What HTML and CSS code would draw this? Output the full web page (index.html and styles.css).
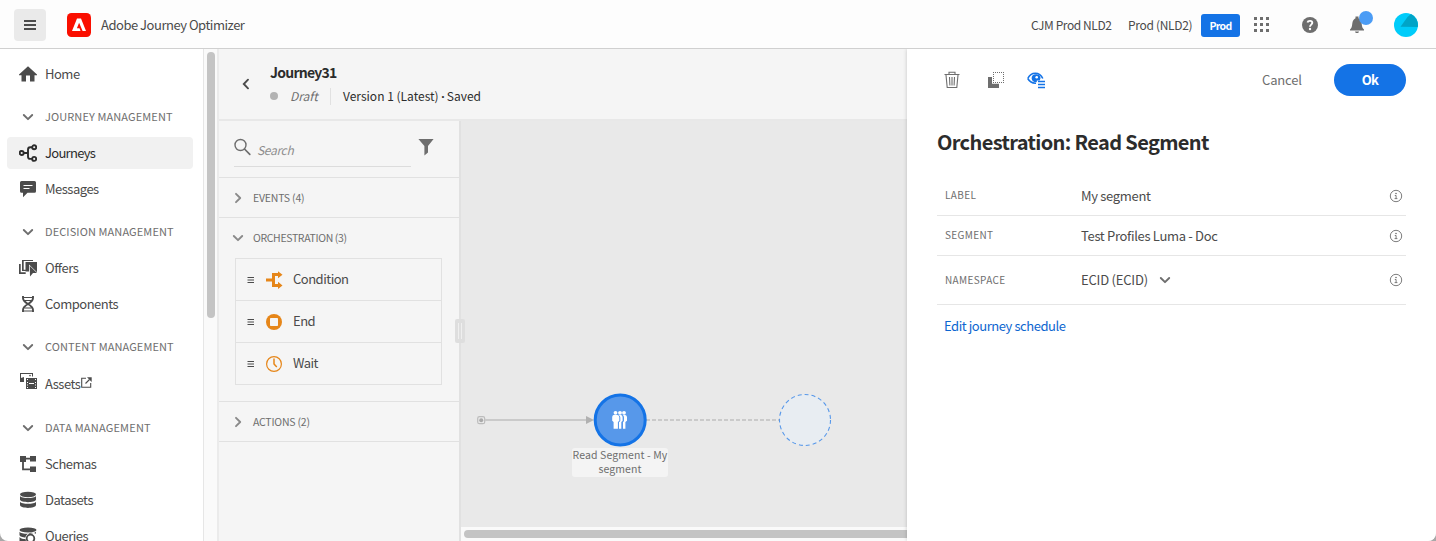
FILE: index.html
```html
<!DOCTYPE html>
<html lang="en">
<head>
<meta charset="utf-8">
<title>Adobe Journey Optimizer</title>
<link rel="stylesheet" href="styles.css">
</head>
<body>
<svg class="defs" width="0" height="0">
  <symbol id="down" viewBox="0 0 12 12"><path d="M1.8 4 6 8.2 10.200 4" fill="none" stroke="currentColor" stroke-width="1.9" stroke-linecap="round" stroke-linejoin="round"/></symbol>
  <symbol id="right" viewBox="0 0 12 12"><path d="M4 1.800 8.200 6 4 10.200" fill="none" stroke="currentColor" stroke-width="1.9" stroke-linecap="round" stroke-linejoin="round"/></symbol>
  <symbol id="grip" viewBox="0 0 8 8"><path d="M.5 1.500h6.500M.5 4h6.500M.5 6.500h6.500" stroke="currentColor" stroke-width="1"/></symbol>
  <symbol id="info" viewBox="0 0 14 14"><circle cx="7" cy="7" r="5.700" fill="none" stroke="currentColor" stroke-width=".9"/><circle cx="7" cy="4.500" r=".8" fill="currentColor"/><path d="M5.800 6.500h1.300v3M5.600 9.600h2.800" fill="none" stroke="currentColor" stroke-width=".9"/></symbol>
</svg>
<div class="app">
  <header class="topbar">
    <button class="menu-btn" aria-label="Menu"><svg width="12" height="10"><path d="M0 1h12M0 5h12M0 9h12" stroke="#4b4b4b" stroke-width="2"/></svg></button>
    <svg class="logo" width="24" height="24" viewBox="0 0 24 24"><rect width="24" height="24" rx="4.500" fill="#fa0f00"/><path d="M5 18 10 5.500h4L19 18h-3.400l-3.500-8.200-2.200 5.400h2.600l1 2.800z" fill="#fff"/></svg>
    <span class="brand">Adobe Journey Optimizer</span>
    <div class="top-right">
      <span class="org">CJM Prod NLD2</span>
      <span class="sandbox">Prod (NLD2)</span>
      <span class="badge">Prod</span>
      <svg class="apps" width="16" height="16" fill="#6e6e6e"><path d="M0 0h3v3H0zM6 0h3v3H6zM12 0h3v3h-3zM0 6h3v3H0zM6 6h3v3H6zM12 6h3v3h-3zM0 12h3v3H0zM6 12h3v3H6zM12 12h3v3h-3z"/></svg>
      <svg class="help" width="16" height="16" viewBox="0 0 16 16"><circle cx="8" cy="8" r="8" fill="#6e6e6e"/><path d="M5.500 5.500C6 3.300 10.300 3.300 10.300 5.800 10.300 7.700 8 7.600 8 9.800" fill="none" stroke="#fff" stroke-width="1.900"/><circle cx="8" cy="12" r="1.200" fill="#fff"/></svg>
      <svg class="bell" width="26" height="24" viewBox="0 0 26 24"><path d="M2 18.500c3-2 1.500-7 3.500-9.500C6.300 8 7.500 7.500 7.500 7V5.500h3V7c0 .5 1.300 1 2 2 2 2.500.500 7.500 3.500 9.500v1H2zM7 20.500h4c-.2 2-3.800 2-4 0z" fill="#6e6e6e"/><circle cx="18" cy="7" r="7" fill="#4b9cf5"/></svg>
      <svg class="avatar" width="24" height="24" viewBox="0 0 24 24"><circle cx="12" cy="12" r="12" fill="#00ccfa"/><path d="M13.500 4 17 1.100A12 12 0 0 1 23.800 14L6.500 13.700z" fill="#00a4c7"/></svg>
    </div>
  </header>
  <div class="body">
    <nav class="side">
      <a class="item"><svg class="ic" viewBox="0 0 18 18"><path d="M9 1.200 0 9.400v.8h2.500V16.500H7v-6h4v6h4.500v-6.300H18v-.8z"/></svg><span>Home</span></a>
      <div class="group"><svg class="chev"><use href="#down"/></svg><span>JOURNEY MANAGEMENT</span></div>
      <a class="item active"><svg class="ic line" viewBox="0 0 18 18"><circle cx="2.700" cy="9" r="2"/><circle cx="15.200" cy="3.300" r="2"/><circle cx="15.200" cy="14.900" r="2"/><path d="M4.800 9h3.700M13.200 3.300h-2q-2.200 0-2.200 2.500v6.600q0 2.500 2.200 2.500h2"/></svg><span>Journeys</span></a>
      <a class="item"><svg class="ic" viewBox="0 0 18 18"><path d="M2.500 1h13A1.500 1.500 0 0 1 17 2.500v8.700a1.500 1.500 0 0 1-1.500 1.500H8.500L4 17.300v-4.600H2.500A1.500 1.500 0 0 1 1 11.200V2.500A1.500 1.500 0 0 1 2.500 1zM4.500 5v1h9V5zm0 3v1h6V8z" fill-rule="evenodd"/></svg><span>Messages</span></a>
      <div class="group"><svg class="chev"><use href="#down"/></svg><span>DECISION MANAGEMENT</span></div>
      <a class="item"><svg class="ic" viewBox="0 0 18 18"><path d="M0 5h1.700v8.300h5V15H0zM3 1h11v1H4.700v8.800h2V12H3zM6.500 3H18v10.200L10 5.500v7H6.500z"/><path d="M10.700 6.800 18 13.900h-4L11 17.600z"/></svg><span>Offers</span></a>
      <a class="item"><svg class="ic" viewBox="0 0 18 18"><path d="M4 1v2c0 6 10 6 10 12v2M14 1v2C14 9 4 9 4 15v2" fill="none" stroke="currentColor" stroke-width="1.900"/><path d="M4 2h10v1H4zM5.500 5h7v1h-7zM5.500 12.500h7v1h-7zM4 15.500h10v1H4z"/></svg><span>Components</span></a>
      <div class="group"><svg class="chev"><use href="#down"/></svg><span>CONTENT MANAGEMENT</span></div>
      <a class="item assets"><svg class="ic" viewBox="0 0 18 18"><path d="M1 1h13v3.500h-1V2H2v4l3-1v5H1z"/><circle cx="11" cy="3.600" r=".8"/><path fill-rule="evenodd" d="M7 6h11v11H7zM8 7v1h1V7zm0 3v1h1v-1zm0 2.500v1h1v-1zm0 2.500v1h1v-1zM16 7v1h1V7zm0 3v1h1v-1zm0 2.500v1h1v-1zm0 2.500v1h1v-1zM10 11v1h5v-1z"/></svg><span>Assets</span><svg class="ext" viewBox="0 0 11 11"><path d="M5 1.200H.7v9h9V6M4.500 6.500l4-4" fill="none" stroke="currentColor" stroke-width="1.100"/><path d="M6 .3h4.700V5z"/></svg></a>
      <div class="group low"><svg class="chev"><use href="#down"/></svg><span>DATA MANAGEMENT</span></div>
      <a class="item"><svg class="ic" viewBox="0 0 18 18"><path d="M1 1h6v6H1zM11 1h6v5.500h-6zM11 11.500h6v5.500h-6z"/><path d="M7 3.700h4M4 7v7.300h7" fill="none" stroke="currentColor" stroke-width="1.800"/></svg><span>Schemas</span></a>
      <a class="item"><svg class="ic" viewBox="0 0 18 18"><ellipse cx="9" cy="3.500" rx="8" ry="2.700"/><path d="M1 5c1.500 2.700 14.500 2.700 16 0v3.800c-1 3.200-15 3.200-16 0zM1 10.700c1.500 2.700 14.500 2.700 16 0v3.600c-1 3.500-15 3.500-16 0z"/></svg><span>Datasets</span></a>
      <a class="item"><svg class="ic" viewBox="0 0 18 18"><ellipse cx="9" cy="3" rx="8.500" ry="2.500"/><path d="M.5 4.800c1.500 2.700 14 2.700 16.500 0v2C13 4.500 7 6 6.500 10.500 4 10.500.5 9.500.5 8zM.5 10c1 1.700 4 2 6 2 .3 2 1 3 2 4.500-4 0-8-1-8-2.500z"/><circle cx="11.500" cy="11.500" r="3.800" fill="none" stroke="currentColor" stroke-width="1.800"/><path d="m14 14 3.500 3.500" stroke="currentColor" stroke-width="2"/></svg><span>Queries</span></a>
    </nav>
    <div class="vtrack"><div class="vthumb"></div></div>
    <main class="editor">
      <div class="ed-head">
        <svg class="back" viewBox="0 0 12 12"><path d="M8 1.700 3.800 6 8 10.300" fill="none" stroke="currentColor" stroke-width="1.900" stroke-linecap="round"/></svg>
        <div class="ed-title">
          <h1>Journey31</h1>
          <div class="meta"><i class="dot"></i><em>Draft</em><span class="version">Version 1 (Latest) <b>·</b> Saved</span></div>
        </div>
      </div>
      <div class="ed-body">
        <aside class="palette">
          <div class="search">
            <div class="field"><svg width="18" height="18" viewBox="0 0 18 18"><circle cx="6.500" cy="7" r="5.500" fill="none" stroke="#6e6e6e" stroke-width="1.400"/><path d="m10.500 11 5.300 5.300" stroke="#6e6e6e" stroke-width="1.700" stroke-linecap="round"/></svg><em>Search</em></div>
            <svg class="filter" width="16" height="18" viewBox="0 0 16 18"><path d="M.4 1h15.200L10 8v6.500L6.400 17.500V8z" fill="#6e6e6e"/></svg>
          </div>
          <div class="acc"><svg class="chev"><use href="#right"/></svg><span>EVENTS (4)</span></div>
          <section class="open">
            <div class="acc"><svg class="chev"><use href="#down"/></svg><span>ORCHESTRATION (3)</span></div>
            <div class="cards">
              <div class="card"><svg class="grip"><use href="#grip"/></svg><svg class="ci" viewBox="0 0 18 18"><path d="M0 7.500h6V2h6V.2L16.500 3.700 12 7.300V5H9v8h3v-2.200l4.500 3.600L12 18v-2H6v-5.500H0z" fill="#e68619"/></svg><span>Condition</span></div>
              <div class="card"><svg class="grip"><use href="#grip"/></svg><svg class="ci" viewBox="0 0 18 18"><circle cx="8" cy="9" r="8" fill="#e68619"/><rect x="4" y="5" width="8" height="8" rx=".7" fill="#f5f5f5"/></svg><span>End</span></div>
              <div class="card"><svg class="grip"><use href="#grip"/></svg><svg class="ci" viewBox="0 0 18 18"><circle cx="8" cy="9" r="7.400" fill="none" stroke="#e68619" stroke-width="1.200"/><path d="M8 3.500V9l2.800 2.900" fill="none" stroke="#e68619" stroke-width="1.500"/></svg><span>Wait</span></div>
            </div>
          </section>
          <div class="acc"><svg class="chev"><use href="#right"/></svg><span>ACTIONS (2)</span></div>
          <div class="handle"><i></i></div>
        </aside>
        <div class="canvas">
          <div class="stage">
            <svg class="links" width="446" height="407">
              <rect x="16.700" y="295.700" width="7" height="7" rx="1.800" fill="none" stroke="#bcbcbc" stroke-width="1.200"/><circle cx="20.200" cy="299.200" r="2" fill="#aaa"/>
              <path d="M24 299h103" stroke="#cacaca" stroke-width="2"/><path d="M125 295v8l8-4z" fill="#b1b1b1"/>
              <path d="M185 299h133" stroke="#cacaca" stroke-width="2" stroke-dasharray="4 2"/>
              <circle cx="159.200" cy="299" r="25" fill="#5798ea" stroke="#1473e6" stroke-width="3"/>
              <g fill="#fff"><circle cx="163" cy="291.800" r="1.900"/><circle cx="159" cy="291.800" r="1.900"/><circle cx="154.500" cy="291.800" r="1.900"/><path d="M152.500 294h4q1.800.500 1.800 2.300v3.500l-1.400 1.200v6.800h-4.300v-6.800l-1.400-1.200v-3.500q0-2 1.300-2.300zM157.600 294h2.500q1.500.5 1.500 2.300v3.500l-1.300 1.300v6.700H158v-6.600l1.300-1.300v-3.500q0-1.800-1.700-2.400zM161.800 294h2.500q1.700.5 1.700 2.300v3.500l-1.600 1.300v6.700H162v-6.600l1-1.300v-3.500q0-1.800-1.200-2.400z"/></g>
              <circle cx="344" cy="299" r="25.500" fill="#e8edf2" stroke="#5798ea" stroke-width="1.100" stroke-dasharray="4 3"/>
            </svg>
            <div class="node-label">Read Segment - My<br>segment</div>
          </div>
          <div class="htrack"><div class="hthumb"></div></div>
        </div>
      </div>
    </main>
    <aside class="panel">
      <div class="tools">
        <svg width="16" height="18" viewBox="0 0 16 18"><path d="M.5 3.500h15M5 3V1.300h6V3M2 4l1.200 12.500h9.600L14 4M5.500 6l.4 8.500M8 6v8.500M10.500 6l-.4 8.500" fill="none" stroke="#6e6e6e" stroke-width="1.100"/></svg>
        <svg class="dup" width="18" height="18" viewBox="0 0 18 18"><path d="M1 6h4v6.700h7V17H1z" fill="#6e6e6e"/><path d="M6 1.500h11M6 11.500h11M6.500 3v8M16.500 3v8" fill="none" stroke="#6e6e6e" stroke-dasharray="1 1"/></svg>
        <svg class="eye" width="19" height="18" viewBox="0 0 19 18"><path d="M.8 7.500c3.200-7 11.800-7 15 0M.8 7.500c2 3.500 5 4.900 8.200 4.700" fill="none" stroke="#1473e6" stroke-width="1.600"/><path d="M9 3.200a4 4 0 1 0 .8 7.800V9.500h3A4 4 0 0 0 9 3.200z" fill="#1473e6"/><circle cx="9.700" cy="6.200" r="1.300" fill="#fff"/><path d="M11 10.500h7M11 13.500h7M11 16.500h7" stroke="#1473e6" stroke-width="1.500"/></svg>
        <span class="cancel">Cancel</span><span class="ok">Ok</span>
      </div>
      <h2>Orchestration: Read Segment</h2>
      <div class="rows">
        <div class="row"><label>LABEL</label><span class="val">My segment</span><svg class="info"><use href="#info"/></svg></div>
        <div class="row"><label>SEGMENT</label><span class="val">Test Profiles Luma - Doc</span><svg class="info"><use href="#info"/></svg></div>
        <div class="row tall"><label>NAMESPACE</label><span class="val">ECID (ECID)<svg class="chev"><use href="#down"/></svg></span><svg class="info"><use href="#info"/></svg></div>
      </div>
      <a class="link">Edit journey schedule</a>
    </aside>
  </div>
</div>
</body>
</html>
```
FILE: styles.css
```css
* { box-sizing: border-box; }
body { margin: 0; background: #a8a8a8; color: #4b4b4b; font: 13px/20px "Noto Sans CJK SC", "Noto Sans", sans-serif; letter-spacing: -.32px; white-space: nowrap; }
svg { display: block; flex: none; }
.defs { position: absolute; }
.app { width: 1436px; height: 541px; overflow: hidden; display: flex; flex-direction: column; background: #fff; border-radius: 0 0 8px 8px; }
.topbar { flex: none; height: 49px; display: flex; align-items: center; border-bottom: 1px solid #d0d0d0; background: #fdfdfd; padding: 1px 18px 0 14px; }
.menu-btn { width: 32px; height: 32px; border: 0; padding: 0; border-radius: 4px; background: #eaeaea; display: flex; align-items: center; justify-content: center; }
.logo { margin-left: 21px; }
.brand { margin-left: 10px; letter-spacing: -.48px; }
.top-right { margin-left: auto; display: flex; align-items: center; font-size: 12px; }
.org { width: 97px; letter-spacing: -.42px; }
.sandbox { width: 73px; }
.badge { width: 39px; height: 23px; margin-top: 1px; border-radius: 3px; background: #1473e6; color: #fff; font-weight: 700; font-size: 10.500px; letter-spacing: -.7px; line-height: 23px; text-align: center; }
.apps { margin-left: 14px; }
.help { margin-left: 32px; }
.bell { margin-left: 30px; margin-top: -4px; }
.avatar { margin-left: 20px; }
.body { flex: 1; min-height: 0; display: flex; }
.side { width: 204px; flex: none; border-right: 1px solid #e6e6e6; padding: 9px 10px 0 7px; }
.item { display: flex; align-items: center; height: 32px; padding-left: 12px; border-radius: 4px; letter-spacing: -.5px; }
.item + .item { margin-top: 4px; }
.item span { margin-left: 8px; }
.active { background: #f1f1f1; color: #2c2c2c; letter-spacing: -.7px; }
.ic { width: 18px; height: 18px; fill: currentColor; }
.line { fill: none; stroke: currentColor; stroke-width: 1.9; }
.ext { width: 11px; height: 11px; fill: currentColor; margin-top: -3px; margin-left: 1px; }
.chev { width: 12px; height: 12px; color: #6e6e6e; }
.group { display: flex; align-items: center; height: 20px; margin: 17px 0 10px; padding-left: 15px; font-size: 11px; letter-spacing: .1px; color: #6e6e6e; }
.group span { margin: -2px 0 0 11px; }
.group.low { margin-top: 18px; }
.group.low span { letter-spacing: .2px; }
.group.low .chev { margin-top: -1px; }
.assets { margin-top: 11px; }
.assets .ic { margin-top: -6px; }
.vtrack { width: 15px; flex: none; background: #fafafa; border-right: 2px solid #ebebeb; padding: 3px 0 0 3px; }
.vthumb { width: 8px; height: 266px; border-radius: 4px; background: #c4c4c4; }
.editor { width: 688px; flex: none; display: flex; flex-direction: column; background: #f5f5f5; }
.ed-head { height: 72px; flex: none; border-bottom: 2px solid #e8e8e8; display: flex; padding-left: 21px; }
.back { width: 12px; height: 12px; margin-top: 29px; }
.ed-title { margin-left: 18px; padding-top: 13px; color: #2c2c2c; }
h1 { margin: 0; font-size: 14px; line-height: 20px; letter-spacing: -.75px; }
.meta { display: flex; align-items: center; height: 16px; margin-top: 6px; font-size: 12px; letter-spacing: 0; }
.dot { width: 8px; height: 8px; border-radius: 50%; background: #b3b3b3; }
.meta em { margin-left: 12px; width: 40px; color: #6e6e6e; }
.version { border-left: 1px solid #e1e1e1; padding-left: 12px; line-height: 16px; }
.version b { font-family: "Noto Sans", sans-serif; letter-spacing: -.5px; }
.ed-body { flex: 1; min-height: 0; display: flex; }
.palette { position: relative; width: 242px; flex: none; border-right: 2px solid #e1e1e1; }
.search { height: 57px; display: flex; padding: 8px 0 0 15px; border-bottom: 1px solid #e1e1e1; }
.field { width: 177px; height: 38px; display: flex; border-bottom: 1px solid #dcdcdc; padding-top: 9px; }
.field em { color: #8e8e8e; margin: 2px 0 0 5px; font-size: 12px; }
.filter { margin: 9px 0 0 7px; }
.acc { height: 40px; display: flex; align-items: center; padding-left: 13px; border-bottom: 1px solid #e1e1e1; font-size: 10.500px; color: #6e6e6e; letter-spacing: -.2px; }
.acc span { margin-left: 9px; }
.acc .chev { color: #8a8a8a; }
.open { border-bottom: 1px solid #e1e1e1; height: 184px; }
.open .acc { border: 0; letter-spacing: -.35px; }
.cards { margin: 0 17px 0 16px; border: 1px solid #e1e1e1; letter-spacing: -.5px; }
.card { height: 42px; display: flex; align-items: center; padding-left: 11px; }
.card:first-child { height: 41px; }
.card + .card { border-top: 1px solid #e1e1e1; }
.card span { margin: -1px 0 0 9px; }
.grip { width: 8px; height: 8px; }
.ci { width: 18px; height: 18px; margin-left: 11px; }
.handle { position: absolute; left: 236px; top: 198px; width: 10px; height: 24px; border-radius: 2px; background: #dedede; padding: 4px 3px; }
.handle i { display: block; height: 16px; border: 1px solid #efefef; border-width: 0 1px; }
.canvas { flex: 1; background: #e9e9e9; display: flex; flex-direction: column; }
.stage { flex: 1; position: relative; }
.links { position: absolute; left: 0; top: 0; }
.node-label { position: absolute; left: 111px; top: 327px; width: 96px; height: 29px; border-radius: 3px; background: #f4f4f4; font-size: 10.500px; line-height: 14px; letter-spacing: .1px; text-align: center; color: #6e6e6e; }
.htrack { height: 14px; background: #fafafa; padding: 3px 0 0 3px; }
.hthumb { height: 8px; border-radius: 4px 0 0 4px; background: #c4c4c4; }
.panel { position: relative; flex: 1; background: #fff; box-shadow: 0 0 4px rgba(0,0,0,.2); clip-path: inset(0 0 0 -8px); padding: 15px 30px 0; }
.tools { height: 32px; display: flex; align-items: center; padding-left: 7px; }
.dup { margin-left: 27px; }
.eye { margin-left: 22px; }
.cancel { margin-left: auto; width: 72px; color: #6e6e6e; letter-spacing: -.15px; }
.ok { width: 72px; height: 32px; line-height: 32px; border-radius: 16px; background: #1473e6; color: #fff; font-weight: 700; letter-spacing: -.7px; text-align: center; }
h2 { margin: 33px 0 0; font-size: 20px; line-height: 26px; letter-spacing: -.64px; color: #2c2c2c; }
.rows { margin-top: 21px; }
.row { height: 40px; display: flex; align-items: center; border-bottom: 1px solid #e6e6e6; padding: 0 3px 0 8px; }
.tall { height: 49px; }
label { width: 136px; margin-top: -1px; font-size: 10px; letter-spacing: .35px; color: #6e6e6e; }
.val { flex: 1; display: flex; align-items: center; }
.tall .val { letter-spacing: -.2px; }
.val .chev { margin-left: 11px; }
.info { width: 14px; height: 14px; color: #6e6e6e; }
.link { display: block; margin: 11px 0 0 7px; color: #0d66d0; letter-spacing: -.45px; }
```
